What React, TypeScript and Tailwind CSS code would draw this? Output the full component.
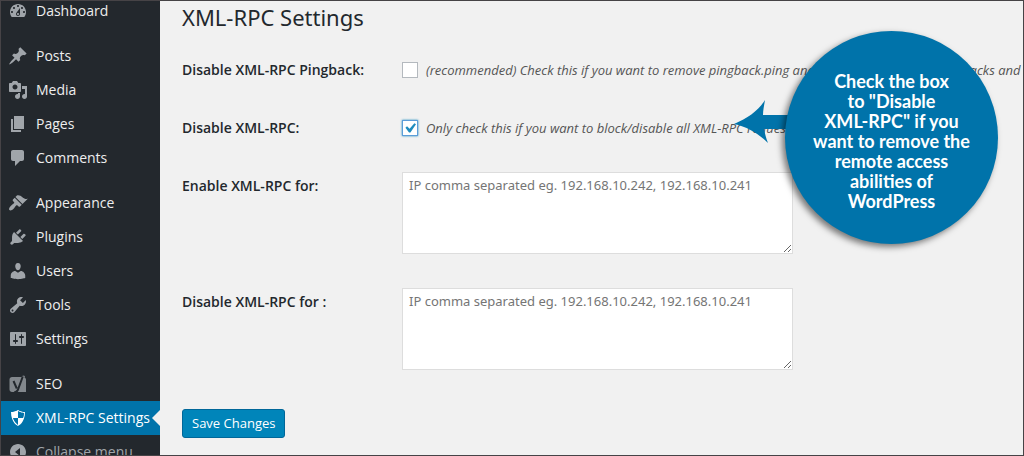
import React from 'react';

const icons = {
  dashboard: "M3.76 16h12.48c1.1-1.37 1.76-3.11 1.76-5 0-4.42-3.58-8-8-8s-8 3.58-8 8c0 1.89.66 3.63 1.76 5zM10 4c.55 0 1 .45 1 1s-.45 1-1 1-1-.45-1-1 .45-1 1-1zM6 6c.55 0 1 .45 1 1s-.45 1-1 1-1-.45-1-1 .45-1 1-1zm8 0c.55 0 1 .45 1 1s-.45 1-1 1-1-.45-1-1 .45-1 1-1zm-5.37 5.55L12 7v6c0 1.1-.9 2-2 2s-2-.9-2-2c0-.57.24-1.08.63-1.45zM4 10c.55 0 1 .45 1 1s-.45 1-1 1-1-.45-1-1 .45-1 1-1zm12 0c.55 0 1 .45 1 1s-.45 1-1 1-1-.45-1-1 .45-1 1-1zm-5 3c0-.55-.45-1-1-1s-1 .45-1 1 .45 1 1 1 1-.45 1-1z",
  posts: "M10.44 3.02l1.82-1.82 6.36 6.35-1.83 1.82c-1.05-.68-2.48-.57-3.41.36l-.75.75c-.92.93-1.04 2.35-.35 3.41l-1.83 1.82-2.41-2.41-2.8 2.79c-.42.42-3.38 2.71-3.8 2.29s1.86-3.39 2.28-3.81l2.79-2.79L4.1 9.36l1.83-1.82c1.05.69 2.48.57 3.4-.36l.75-.75c.93-.92 1.05-2.35.36-3.41z",
  media: "M13 11V4c0-.55-.45-1-1-1h-1.67L9 1H5L3.67 3H2c-.55 0-1 .45-1 1v7c0 .55.45 1 1 1h10c.55 0 1-.45 1-1zM7 4.5c1.38 0 2.5 1.12 2.5 2.5S8.38 9.5 7 9.5 4.5 8.38 4.5 7 5.62 4.5 7 4.5zM14 6h5v10.5c0 1.38-1.12 2.5-2.5 2.5S14 17.88 14 16.5s1.12-2.5 2.5-2.5c.17 0 .34.02.5.05V9h-3V6zm-4 8.05V13h2v3.5c0 1.38-1.12 2.5-2.5 2.5S7 17.88 7 16.5 8.12 14 9.5 14c.17 0 .34.02.5.05z",
  pages: "M6 15V2h10v13H6zm-1 1h8v2H3V5h2v11z",
  comments: "M5 2h9c1.1 0 2 .9 2 2v7c0 1.1-.9 2-2 2h-2l-5 5v-5H5c-1.1 0-2-.9-2-2V4c0-1.1.9-2 2-2z",
  appearance: "M14.48 11.06L7.41 3.99l1.5-1.5c.5-.56 2.3-.47 3.51.32 1.21.8 1.43 1.28 2.91 2.1 1.18.64 2.45 1.26 4.45.85zm-.71.71L6.7 4.7 4.93 6.47c-.39.39-.39 1.02 0 1.41l1.06 1.06c.39.39.39 1.03 0 1.42-.6.6-1.43 1.11-2.21 1.69-.35.26-.7.53-1.01.84C1.43 14.23.4 16.08 1.4 17.07c.99 1 2.84-.03 4.18-1.36.31-.31.58-.66.85-1.02.57-.78 1.08-1.61 1.69-2.21.39-.39 1.02-.39 1.41 0l1.06 1.06c.39.39 1.02.39 1.41 0z",
  plugins: "M13.11 4.36L9.87 7.6 8 5.73l3.24-3.24c.35-.34 1.05-.2 1.56.32.52.51.66 1.21.31 1.55zm-8 1.77l.91-1.12 9.01 9.01-1.19.84c-.71.71-2.63 1.16-3.82 1.16H6.14L4.9 17.26c-.59.59-1.54.59-2.12 0-.59-.58-.59-1.53 0-2.12l1.24-1.24v-3.88c0-1.13.4-3.19 1.09-3.89zm7.26 3.97l3.24-3.24c.34-.35 1.04-.21 1.55.31.52.51.66 1.21.31 1.55l-3.24 3.25z",
  users: "M10 9.25c-2.27 0-2.73-3.44-2.73-3.44C7 4.02 7.82 2 9.97 2c2.16 0 2.98 2.02 2.71 3.81 0 0-.41 3.44-2.68 3.44zm0 2.57L12.72 10c2.39 0 4.52 2.33 4.52 4.53v2.49s-3.65 1.13-7.24 1.13c-3.65 0-7.24-1.13-7.24-1.13v-2.49c0-2.25 1.94-4.48 4.47-4.48z",
  tools: "M16.68 9.77c-1.34 1.34-3.3 1.67-4.95.99l-5.41 6.52c-.99.99-2.59.99-3.58 0s-.99-2.59 0-3.57l6.52-5.42c-.68-1.65-.35-3.61.99-4.95 1.28-1.28 3.12-1.62 4.72-1.06l-2.89 2.89 2.82 2.82 2.86-2.87c.53 1.58.18 3.39-1.08 4.65zM3.81 16.21c.4.39 1.04.39 1.43 0 .4-.4.4-1.04 0-1.43-.39-.4-1.03-.4-1.43 0-.39.39-.39 1.03 0 1.43z",
  settings: "M18 16V4c0-.55-.45-1-1-1H3c-.55 0-1 .45-1 1v12c0 .55.45 1 1 1h14c.55 0 1-.45 1-1zM8 11h1c.55 0 1 .45 1 1s-.45 1-1 1H8v1.5c0 .28-.22.5-.5.5s-.5-.22-.5-.5V13H6c-.55 0-1-.45-1-1s.45-1 1-1h1V5.5c0-.28.22-.5.5-.5s.5.22.5.5V11zm5-2h-1c-.55 0-1-.45-1-1s.45-1 1-1h1V5.5c0-.28.22-.5.5-.5s.5.22.5.5V7h1c.55 0 1 .45 1 1s-.45 1-1 1h-1v5.5c0 .28-.22.5-.5.5s-.5-.22-.5-.5V9z",
  shield: "M10 2s3 2 7 2c0 11-7 14-7 14S3 15 3 4c4 0 7-2 7-2zm0 8h5s1-1 1-5c0 0-5-1-6-2v7H5c1 4 5 7 5 7v-7z",
  collapse: "M10 2c4.42 0 8 3.58 8 8s-3.58 8-8 8-8-3.58-8-8 3.58-8 8-8zm2 12V6l-5 4z",
};

const menuGroups = [
  [{ label: "Dashboard", icon: icons.dashboard }],
  [
    { label: "Posts", icon: icons.posts },
    { label: "Media", icon: icons.media },
    { label: "Pages", icon: icons.pages },
    { label: "Comments", icon: icons.comments },
  ],
  [
    { label: "Appearance", icon: icons.appearance },
    { label: "Plugins", icon: icons.plugins },
    { label: "Users", icon: icons.users },
    { label: "Tools", icon: icons.tools },
    { label: "Settings", icon: icons.settings },
  ],
];

const Icon = ({ path, className }: { path: string; className: string }) => (
  <svg viewBox="0 0 20 20" className={`h-5 w-5 shrink-0 ${className}`} fill="currentColor" fillRule="evenodd" aria-hidden="true">
    <path d={path} />
  </svg>
);

const SeoIcon = () => (
  <svg viewBox="0 0 20 20" className="h-5 w-5 shrink-0" aria-hidden="true">
    <path d="M4 3h9.500L15 1.500l2 .5-.5 1.500c.9.400 1.500 1.200 1.500 2.300V18H4c-1.400 0-2.500-1.100-2.500-2.500v-10C1.500 4.100 2.600 3 4 3z" fill="#82878c" />
    <path d="M5.500 7l3.300 7.500M14.800 2.500l-5 13.500c-.7 1.500-1.700 2.300-3.600 2.300" fill="none" stroke="#23282d" strokeWidth="2" />
  </svg>
);

const Sidebar = () => (
  <nav className="w-[159px] shrink-0 bg-[#23282d] text-sm text-[#eee]">
    <div className="-mt-[7px] flex flex-col gap-[11px]">
      {menuGroups.map((group, groupIndex) => (
        <ul key={groupIndex}>
          {group.map((item) => (
            <li key={item.label}>
              <a href="#" className="flex h-[34px] items-center gap-2 pl-[7px]">
                <Icon path={item.icon} className="text-[#a0a5aa]" />
                {item.label}
              </a>
            </li>
          ))}
        </ul>
      ))}
      <ul>
        <li>
          <a href="#" className="flex h-[34px] items-center gap-2 pl-[7px]">
            <SeoIcon />
            SEO
          </a>
        </li>
        <li>
          <a href="#" aria-current="page" className="flex h-[34px] items-center bg-[#0073aa] pl-[7px] whitespace-nowrap text-white">
            <Icon path={icons.shield} className="text-white" />
            <span className="min-w-0 flex-1 pl-2">XML-RPC Settings</span>
            <span className="border-y-8 border-r-8 border-y-transparent border-r-[#f1f1f1]"></span>
          </a>
        </li>
        <li>
          <button type="button" className="flex h-[34px] items-center gap-2 pl-[7px] text-[#a0a5aa]">
            <Icon path={icons.collapse} className="text-[#a0a5aa]" />
            Collapse menu
          </button>
        </li>
      </ul>
    </div>
  </nav>
);

const CheckboxRow = ({ id, label, text, checked }: { id: string; label: string; text: string; checked?: boolean }) => (
  <div className="flex h-[58px] items-center">
    <label htmlFor={id} className="w-[220px] shrink-0 font-semibold">{label}</label>
    <span className="grid h-4 w-4 shrink-0">
      <input
        id={id}
        type="checkbox"
        defaultChecked={checked}
        className="peer col-start-1 row-start-1 h-4 w-4 appearance-none border border-[#b4b9be] bg-white checked:border-[#5b9dd9] checked:shadow-[0_0_2px_#1e8cbe]"
      />
      <svg viewBox="0 0 20 20" className="pointer-events-none invisible col-start-1 row-start-1 h-4 w-4 text-[#1e8cbe] peer-checked:visible" fill="currentColor" aria-hidden="true">
        <path d="M15.500 4l2 1.400-7 10.100H8.800L4.300 9.800l2-1.900 3.200 3.100z" />
      </svg>
    </span>
    <span className="ml-2 text-[13px] whitespace-nowrap text-[#555] italic">{text}</span>
  </div>
);

const TextareaRow = ({ id, label }: { id: string; label: string }) => (
  <div className="flex h-[116px] items-start pt-[15px]">
    <label htmlFor={id} className="w-[220px] shrink-0 pt-1 font-semibold">{label}</label>
    <textarea
      id={id}
      placeholder="IP comma separated eg. 192.168.10.242, 192.168.10.241"
      className="h-[82px] w-[391px] border border-[#ddd] bg-white px-[6px] py-[2px] font-['Noto_Sans',sans-serif] text-[13px] leading-5 placeholder:text-[#757575]"
    ></textarea>
  </div>
);

const Callout = () => (
  <div className="absolute top-[30px] left-[574px] flex">
    <svg viewBox="0 0 60 46" className="mt-[67px] -mr-[9px] h-[46px] w-[60px]" fill="#0073aa" aria-hidden="true">
      <path d="M0 26C14 20 24 13 31 2c-1 6-2 10-2 15h31v14H30c1 5 2 9 4 14C25 36 14 29 0 26z" />
    </svg>
    <div className="flex h-[213px] w-[213px] items-center justify-center rounded-full bg-[#0073aa] pt-[6px] text-center font-['Lato',sans-serif] text-[18px] leading-5 font-bold text-white shadow-[-3px_3px_6px_rgba(0,0,0,0.5)]">
      <p>
        Check the box<br />
        to "Disable<br />
        XML-RPC" if you<br />
        want to remove the<br />
        remote access<br />
        abilities of<br />
        WordPress
      </p>
    </div>
  </div>
);

const App = () => {
  return (
    <div className="flex h-screen overflow-hidden border border-[#464346] bg-[#f1f1f1] font-['Open_Sans',sans-serif] text-[#23282d]">
      <Sidebar />
      <main className="relative min-w-0 flex-1 overflow-hidden pl-[22px] text-sm">
        <h1 className="h-10 font-['Noto_Sans',sans-serif] text-[22px] leading-8 font-normal">XML-RPC Settings</h1>
        <form>
          <CheckboxRow
            id="disable-pingback"
            label="Disable XML-RPC Pingback:"
            text="(recommended) Check this if you want to remove pingback.ping and pingback.extensions.Pingbacks and"
          />
          <CheckboxRow
            id="disable-xmlrpc"
            label="Disable XML-RPC:"
            text="Only check this if you want to block/disable all XML-RPC requests"
            checked
          />
          <TextareaRow id="enable-for" label="Enable XML-RPC for:" />
          <TextareaRow id="disable-for" label="Disable XML-RPC for :" />
          <button
            type="button"
            className="mt-5 h-[29px] rounded-[3px] border border-[#006799] bg-[#0085ba] px-[9px] text-[13px] text-white"
          >
            Save Changes
          </button>
        </form>
        <Callout />
      </main>
    </div>
  );
};

export default App;
